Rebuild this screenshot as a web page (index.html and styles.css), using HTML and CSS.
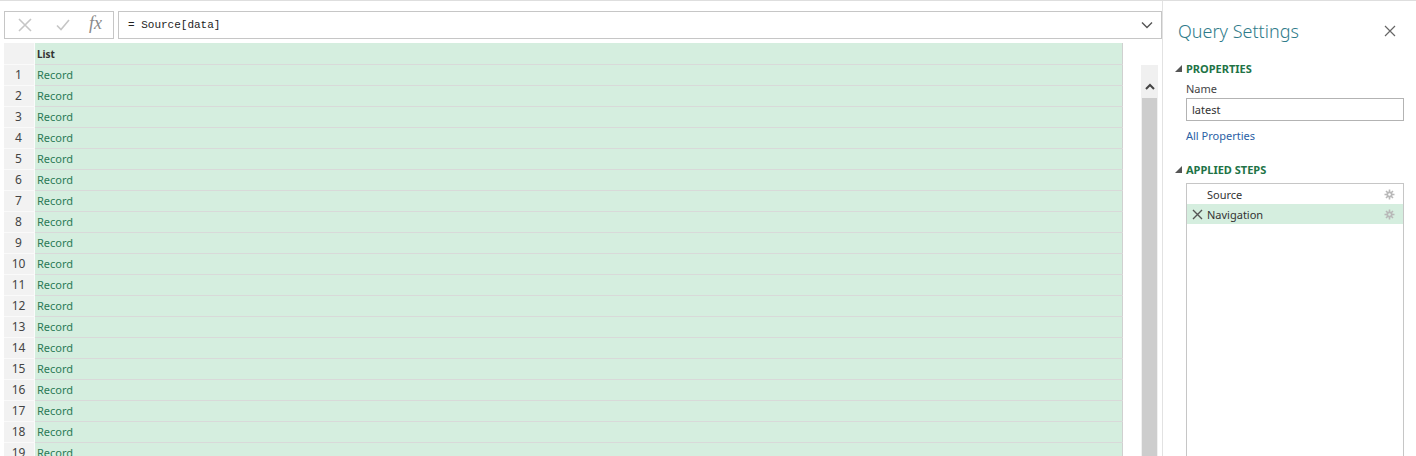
FILE: index.html
```html
<!DOCTYPE html>
<html>

<head>
  <title>Query Editor</title>
  <link rel="stylesheet" href="styles.css">
</head>

<body>
  <div class="app">
    <div class="main">
      <div class="formula-bar">
        <div class="fb-buttons">
          <svg class="fb-icon" width="16" height="16" viewBox="0 0 16 16"><path d="M2 2 L14 14 M14 2 L2 14" stroke="#c6c6c6" stroke-width="1.6" fill="none"/></svg>
          <svg class="fb-icon" width="16" height="16" viewBox="0 0 16 16"><path d="M2 8.5 L6 12.5 L14 3" stroke="#c6c6c6" stroke-width="1.6" fill="none"/></svg>
          <span class="fx">fx</span>
        </div>
        <div class="fb-input">
          <span class="formula">= Source[data]</span>
          <svg width="12" height="8" viewBox="0 0 12 8"><path d="M1 1.5 L6 6.5 L11 1.5" stroke="#555" stroke-width="1.4" fill="none"/></svg>
        </div>
      </div>

      <div class="grid-area">
        <table class="grid">
          <tr class="head"><td class="num"></td><td class="cell">List</td></tr>
          <tr><td class="num">1</td><td class="cell">Record</td></tr>
          <tr><td class="num">2</td><td class="cell">Record</td></tr>
          <tr><td class="num">3</td><td class="cell">Record</td></tr>
          <tr><td class="num">4</td><td class="cell">Record</td></tr>
          <tr><td class="num">5</td><td class="cell">Record</td></tr>
          <tr><td class="num">6</td><td class="cell">Record</td></tr>
          <tr><td class="num">7</td><td class="cell">Record</td></tr>
          <tr><td class="num">8</td><td class="cell">Record</td></tr>
          <tr><td class="num">9</td><td class="cell">Record</td></tr>
          <tr><td class="num">10</td><td class="cell">Record</td></tr>
          <tr><td class="num">11</td><td class="cell">Record</td></tr>
          <tr><td class="num">12</td><td class="cell">Record</td></tr>
          <tr><td class="num">13</td><td class="cell">Record</td></tr>
          <tr><td class="num">14</td><td class="cell">Record</td></tr>
          <tr><td class="num">15</td><td class="cell">Record</td></tr>
          <tr><td class="num">16</td><td class="cell">Record</td></tr>
          <tr><td class="num">17</td><td class="cell">Record</td></tr>
          <tr><td class="num">18</td><td class="cell">Record</td></tr>
          <tr><td class="num">19</td><td class="cell">Record</td></tr>
        </table>

        <div class="vscroll">
          <div class="vscroll-up">
            <svg width="10" height="7" viewBox="0 0 10 7"><path d="M1 6 L5 2 L9 6" stroke="#444" stroke-width="2" fill="none"/></svg>
          </div>
          <div class="vscroll-thumb"></div>
        </div>
      </div>
    </div>

    <aside class="settings">
      <div class="settings-title">
        <span>Query Settings</span>
        <svg width="12" height="12" viewBox="0 0 12 12"><path d="M1 1 L11 11 M11 1 L1 11" stroke="#666" stroke-width="1.2" fill="none"/></svg>
      </div>

      <div class="section-head">
        <svg class="tri" width="7" height="7" viewBox="0 0 7 7"><polygon points="7,0 7,7 0,7" fill="#555"/></svg>
        <span>PROPERTIES</span>
      </div>
      <div class="section-body">
        <div class="field-label">Name</div>
        <div class="field-input">latest</div>
        <a class="link">All Properties</a>
      </div>

      <div class="section-head steps-head">
        <svg class="tri" width="7" height="7" viewBox="0 0 7 7"><polygon points="7,0 7,7 0,7" fill="#555"/></svg>
        <span>APPLIED STEPS</span>
      </div>
      <div class="section-body">
        <ul class="steps">
          <li class="step">
            <span class="step-x"></span>
            <span class="step-name">Source</span>
            <svg class="gear" width="11" height="11" viewBox="0 0 11 11"><path d="M5.5 0.5 V10.5 M0.5 5.5 H10.5 M2 2 L9 9 M9 2 L2 9" stroke="#b8b8b8" stroke-width="1.6"/><circle cx="5.5" cy="5.5" r="3" fill="#b8b8b8"/><circle cx="5.5" cy="5.5" r="1.3" fill="#fff"/></svg>
          </li>
          <li class="step selected">
            <span class="step-x"><svg width="11" height="11" viewBox="0 0 11 11"><path d="M1 1 L10 10 M10 1 L1 10" stroke="#555" stroke-width="1.4" fill="none"/></svg></span>
            <span class="step-name">Navigation</span>
            <svg class="gear" width="11" height="11" viewBox="0 0 11 11"><path d="M5.5 0.5 V10.5 M0.5 5.5 H10.5 M2 2 L9 9 M9 2 L2 9" stroke="#b8b8b8" stroke-width="1.6"/><circle cx="5.5" cy="5.5" r="3" fill="#b8b8b8"/><circle cx="5.5" cy="5.5" r="1.3" fill="#d5eedf"/></svg>
          </li>
        </ul>
      </div>
    </aside>
  </div>
</body>

</html>
```

FILE: styles.css
```css
body {
  margin: 0;
  padding: 0;
  font-family: "Noto Sans", "Open Sans", sans-serif;
  font-size: 11px;
  color: #444;
  background: #fff;
  overflow: hidden;
}

.app {
  display: flex;
  height: 455px;
  border-top: 1px solid #dedede;
}

/* left side: formula bar + data grid */

.main {
  width: 1158px;
  padding: 10px 0 0 4px;
  border-right: 1px solid #e2e2e2;
  display: flex;
  flex-direction: column;
  gap: 4px;
  overflow: hidden;
}

.formula-bar {
  display: flex;
  flex-shrink: 0;
  gap: 4px;
  height: 28px;
}

.fb-buttons {
  width: 110px;
  box-sizing: border-box;
  border: 1px solid #c6c6c6;
  display: flex;
  align-items: center;
  padding-left: 12px;
}

.fb-icon {
  margin-right: 22px;
}

.fb-icon + .fb-icon {
  margin-right: 18px;
}

.fx {
  font-family: "Liberation Serif", serif;
  font-style: italic;
  font-size: 18px;
  color: #8a8a8a;
  margin-top: -3px;
}

.fb-input {
  flex: 1;
  border: 1px solid #c6c6c6;
  display: flex;
  align-items: center;
  justify-content: space-between;
  padding: 0 8px 0 9px;
}

.formula {
  font-family: "Liberation Mono", monospace;
  font-size: 11px;
  color: #222;
}

.grid-area {
  display: flex;
  align-items: flex-start;
  gap: 18px;
  flex-shrink: 0;
}

.grid {
  border-collapse: collapse;
  width: 1119px;
}

.grid td {
  height: 20px;
  padding: 0;
  border-bottom: 1px solid #d9d9d9;
  line-height: 20px;
}

.grid .num {
  width: 29px;
  background: #f2f2f2;
  border-right: 1px solid #fbfbfb;
  text-align: center;
  font-size: 12px;
  color: #444;
  padding-right: 1px;
  border-bottom-color: #fafafa;
}

.grid .cell {
  background: #d5eedf;
  color: #2b7a56;
  padding-left: 2px;
  border-right: 1px solid #d0d0d0;
}

.grid .head td {
  height: 21px;
  font-weight: bold;
  font-size: 10px;
  color: #333;
}

.vscroll {
  margin-top: 22px;
  width: 17px;
  height: 400px;
  background: #f0f0f0;
}

.vscroll-up {
  height: 33px;
  box-sizing: border-box;
  padding-top: 18px;
  display: flex;
  justify-content: center;
}

.vscroll-thumb {
  margin: 0 1px;
  height: 360px;
  background: #cdcdcd;
}

/* right side: query settings pane */

.settings {
  flex: 1;
  padding: 0 12px 0 12px;
}

.settings-title {
  display: flex;
  align-items: center;
  justify-content: space-between;
  padding: 16px 8px 0 3px;
  height: 28px;
  font-size: 18px;
  font-weight: 300;
  color: #2f7b8a;
}

.section-head {
  display: flex;
  align-items: center;
  gap: 4px;
  margin-top: 15px;
  height: 16px;
  font-weight: bold;
  color: #217346;
}

.tri {
  margin-top: 1px;
}

.steps-head {
  margin-top: 17px;
}

.section-body {
  padding-left: 11px;
}

.field-label {
  margin-top: 4px;
  line-height: 18px;
}

.field-input {
  margin-top: 0;
  height: 21px;
  border: 1px solid #b3b3b3;
  line-height: 21px;
  padding-left: 5px;
  color: #333;
}

.link {
  display: block;
  margin-top: 6px;
  line-height: 17px;
  color: #2b5fa5;
}

.steps {
  list-style: none;
  margin: 6px 0 0 0;
  padding: 0;
  height: 280px;
  border: 1px solid #c6c6c6;
}

.step {
  display: flex;
  align-items: center;
  height: 20px;
  padding-right: 8px;
  color: #333;
}

.step.selected {
  background: #d5eedf;
}

.step-x {
  width: 20px;
  display: flex;
  justify-content: center;
}

.step-name {
  flex: 1;
}
```
